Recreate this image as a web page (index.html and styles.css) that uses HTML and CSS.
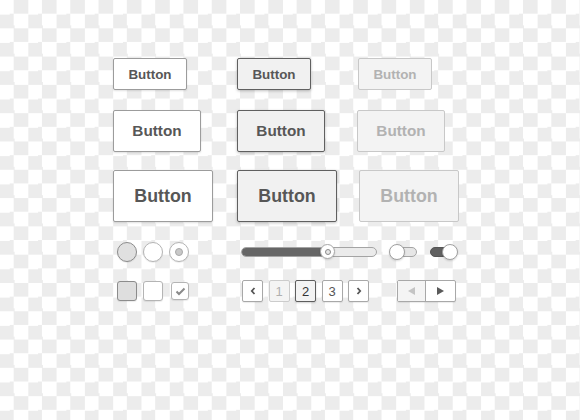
FILE: index.html
```html
<!DOCTYPE html>
<html>
<head>
<meta charset="utf-8">
<link rel="stylesheet" href="styles.css">
</head>
<body>
<div class="canvas">
  <div class="row row-1">
    <button class="btn btn-sm">Button</button>
    <button class="btn btn-sm btn-active">Button</button>
    <button class="btn btn-sm btn-disabled">Button</button>
  </div>
  <div class="row row-2">
    <button class="btn btn-md">Button</button>
    <button class="btn btn-md btn-active">Button</button>
    <button class="btn btn-md btn-disabled">Button</button>
  </div>
  <div class="row row-3">
    <button class="btn btn-lg">Button</button>
    <button class="btn btn-lg btn-active">Button</button>
    <button class="btn btn-lg btn-disabled">Button</button>
  </div>
  <div class="row row-4">
    <div class="radios">
      <span class="radio radio-filled"></span>
      <span class="radio"></span>
      <span class="radio radio-checked"><span class="radio-dot"></span></span>
    </div>
    <div class="slider">
      <div class="slider-fill" style="width: 86px"></div>
      <span class="slider-knob"><span class="knob-ring"></span></span>
    </div>
    <div class="toggle toggle-off"><span class="toggle-knob"></span></div>
    <div class="toggle toggle-on"><span class="toggle-knob"></span></div>
  </div>
  <div class="row row-5">
    <div class="checks">
      <span class="check check-filled"></span>
      <span class="check"></span>
      <span class="check check-checked">
        <svg width="11" height="9" viewBox="0 0 11 9"><path d="M1.5 4.5 L4 7 L9.5 1.5" fill="none" stroke="#8a8a8a" stroke-width="2"/></svg>
      </span>
    </div>
    <div class="pager">
      <span class="page"><svg width="6" height="8" viewBox="0 0 6 8"><path d="M4.5 1 L1.8 4 L4.5 7" fill="none" stroke="#555" stroke-width="1.8"/></svg></span>
      <span class="page page-dim">1</span>
      <span class="page page-current">2</span>
      <span class="page">3</span>
      <span class="page"><svg width="6" height="8" viewBox="0 0 6 8"><path d="M1.5 1 L4.2 4 L1.5 7" fill="none" stroke="#555" stroke-width="1.8"/></svg></span>
    </div>
    <div class="segment">
      <span class="seg seg-left"><svg width="9" height="10" viewBox="0 0 9 10"><path d="M1 5 L8 1 L8 9 Z" fill="#c4c4c4"/></svg></span>
      <span class="seg seg-right"><svg width="9" height="10" viewBox="0 0 9 10"><path d="M8 5 L1 1 L1 9 Z" fill="#5a5a5a"/></svg></span>
    </div>
  </div>
</div>
</body>
</html>
```

FILE: styles.css
```css
html, body {
  margin: 0;
  padding: 0;
}

.canvas {
  width: 580px;
  height: 420px;
  box-sizing: border-box;
  padding: 58px 0 0 113px;
  background: repeating-conic-gradient(#ececec 0 25%, #ffffff 0 50%) 0 0 / 28.3px 28.3px;
  font-family: "Liberation Sans", Arial, sans-serif;
  display: flex;
  flex-direction: column;
}

.row {
  display: flex;
  align-items: center;
}

.row-2 { margin-top: 20px; }
.row-3 { margin-top: 18px; }
.row-4 { margin-top: 20px; height: 20px; }
.row-5 { margin-top: 18px; height: 22px; }

.btn {
  box-sizing: border-box;
  margin: 0;
  padding: 0;
  font-family: "Liberation Sans", Arial, sans-serif;
  font-weight: bold;
  color: #575757;
  background: #ffffff;
  border: 1px solid #9c9c9c;
  border-radius: 2px;
  box-shadow: 0 1px 2px rgba(0, 0, 0, 0.12);
}

.btn-active {
  background: #f1f1f1;
  border-color: #606060;
  box-shadow: 0 1px 3px rgba(0, 0, 0, 0.25);
}

.btn-disabled {
  background: #f3f3f3;
  border-color: #c8c8c8;
  color: #b2b2b2;
  box-shadow: none;
}

.btn-sm {
  width: 74px;
  height: 32px;
  font-size: 13.4px;
  margin-right: 50px;
}
.btn-sm.btn-active { margin-right: 47px; }

.btn-md {
  width: 88px;
  height: 42px;
  font-size: 15.3px;
  margin-right: 36px;
}
.btn-md.btn-active { margin-right: 32px; }

.btn-lg {
  width: 100px;
  height: 52px;
  font-size: 17.8px;
  margin-right: 24px;
}
.btn-lg.btn-active { margin-right: 22px; }

/* radios */
.radios {
  display: flex;
  gap: 6px;
  margin-left: 4px;
}

.radio {
  box-sizing: border-box;
  width: 20px;
  height: 20px;
  border-radius: 50%;
  border: 1px solid #b4b4b4;
  background: #ffffff;
  display: flex;
  align-items: center;
  justify-content: center;
  box-shadow: 0 1px 1px rgba(0, 0, 0, 0.08);
}

.radio-filled {
  background: #e0e0e0;
  border-color: #8c8c8c;
}

.radio-dot {
  width: 8px;
  height: 8px;
  border-radius: 50%;
  background: #c8c8c8;
  border: 1px solid #a8a8a8;
  box-sizing: border-box;
}

/* slider */
.slider {
  position: relative;
  box-sizing: border-box;
  width: 136px;
  height: 10px;
  margin-left: 52px;
  border: 1px solid #a4a4a4;
  border-radius: 5px;
  background: #ebebeb;
}

.slider-fill {
  height: 100%;
  background: #666666;
  border-radius: 4px 0 0 4px;
}

.slider-knob {
  position: absolute;
  left: 78px;
  top: -4px;
  box-sizing: border-box;
  width: 15px;
  height: 15px;
  border-radius: 50%;
  background: #ffffff;
  border: 1px solid #a8a8a8;
  display: flex;
  align-items: center;
  justify-content: center;
  box-shadow: 0 1px 2px rgba(0, 0, 0, 0.15);
}

.knob-ring {
  width: 6px;
  height: 6px;
  box-sizing: border-box;
  border-radius: 50%;
  border: 1.5px solid #8a8a8a;
  background: #e6e6e6;
}

/* toggles */
.toggle {
  position: relative;
  box-sizing: border-box;
  width: 25px;
  height: 10px;
  border-radius: 5px;
  border: 1px solid #a4a4a4;
}

.toggle-off {
  margin-left: 15px;
  background: #e6e6e6;
}

.toggle-on {
  margin-left: 13px;
  background: #606060;
  border-color: #555555;
}

.toggle-knob {
  position: absolute;
  top: -4px;
  box-sizing: border-box;
  width: 16px;
  height: 16px;
  border-radius: 50%;
  background: #ffffff;
  border: 1px solid #a0a0a0;
  box-shadow: 0 1px 2px rgba(0, 0, 0, 0.15);
}

.toggle-off .toggle-knob { left: -4px; }
.toggle-on .toggle-knob { right: -4px; }

/* checkboxes */
.checks {
  display: flex;
  align-items: center;
  gap: 6px;
  margin-left: 4px;
}

.check {
  box-sizing: border-box;
  width: 20px;
  height: 20px;
  border-radius: 3px;
  border: 1px solid #b4b4b4;
  background: #ffffff;
  display: flex;
  align-items: center;
  justify-content: center;
  box-shadow: 0 1px 1px rgba(0, 0, 0, 0.08);
}

.check-filled {
  background: #dedede;
  border-color: #8c8c8c;
}

.check-checked {
  width: 18px;
  height: 18px;
  margin-left: 2px;
}

/* pagination */
.pager {
  display: flex;
  gap: 5.5px;
  margin-left: 53px;
}

.page {
  box-sizing: border-box;
  width: 21px;
  height: 22px;
  border: 1px solid #a8a8a8;
  border-radius: 2px;
  background: #ffffff;
  color: #555555;
  font-size: 13px;
  display: flex;
  align-items: center;
  justify-content: center;
  box-shadow: 0 1px 1px rgba(0, 0, 0, 0.08);
}

.page-dim {
  background: #f4f4f4;
  border-color: #cccccc;
  color: #b0b0b0;
  box-shadow: none;
}

.page-current {
  background: #f3f3f3;
  border-color: #5e5e5e;
  color: #333333;
  box-shadow: 0 1px 2px rgba(0, 0, 0, 0.18);
}

/* segmented arrows */
.segment {
  display: flex;
  box-sizing: border-box;
  width: 59px;
  height: 22px;
  margin-left: 28px;
  border: 1px solid #a8a8a8;
  border-radius: 2px;
  background: #ffffff;
  box-shadow: 0 1px 1px rgba(0, 0, 0, 0.08);
}

.seg {
  display: flex;
  align-items: center;
  justify-content: center;
}

.seg-left {
  width: 27px;
  background: #f4f4f4;
  border-right: 1px solid #a8a8a8;
}

.seg-right {
  flex: 1;
}
```
